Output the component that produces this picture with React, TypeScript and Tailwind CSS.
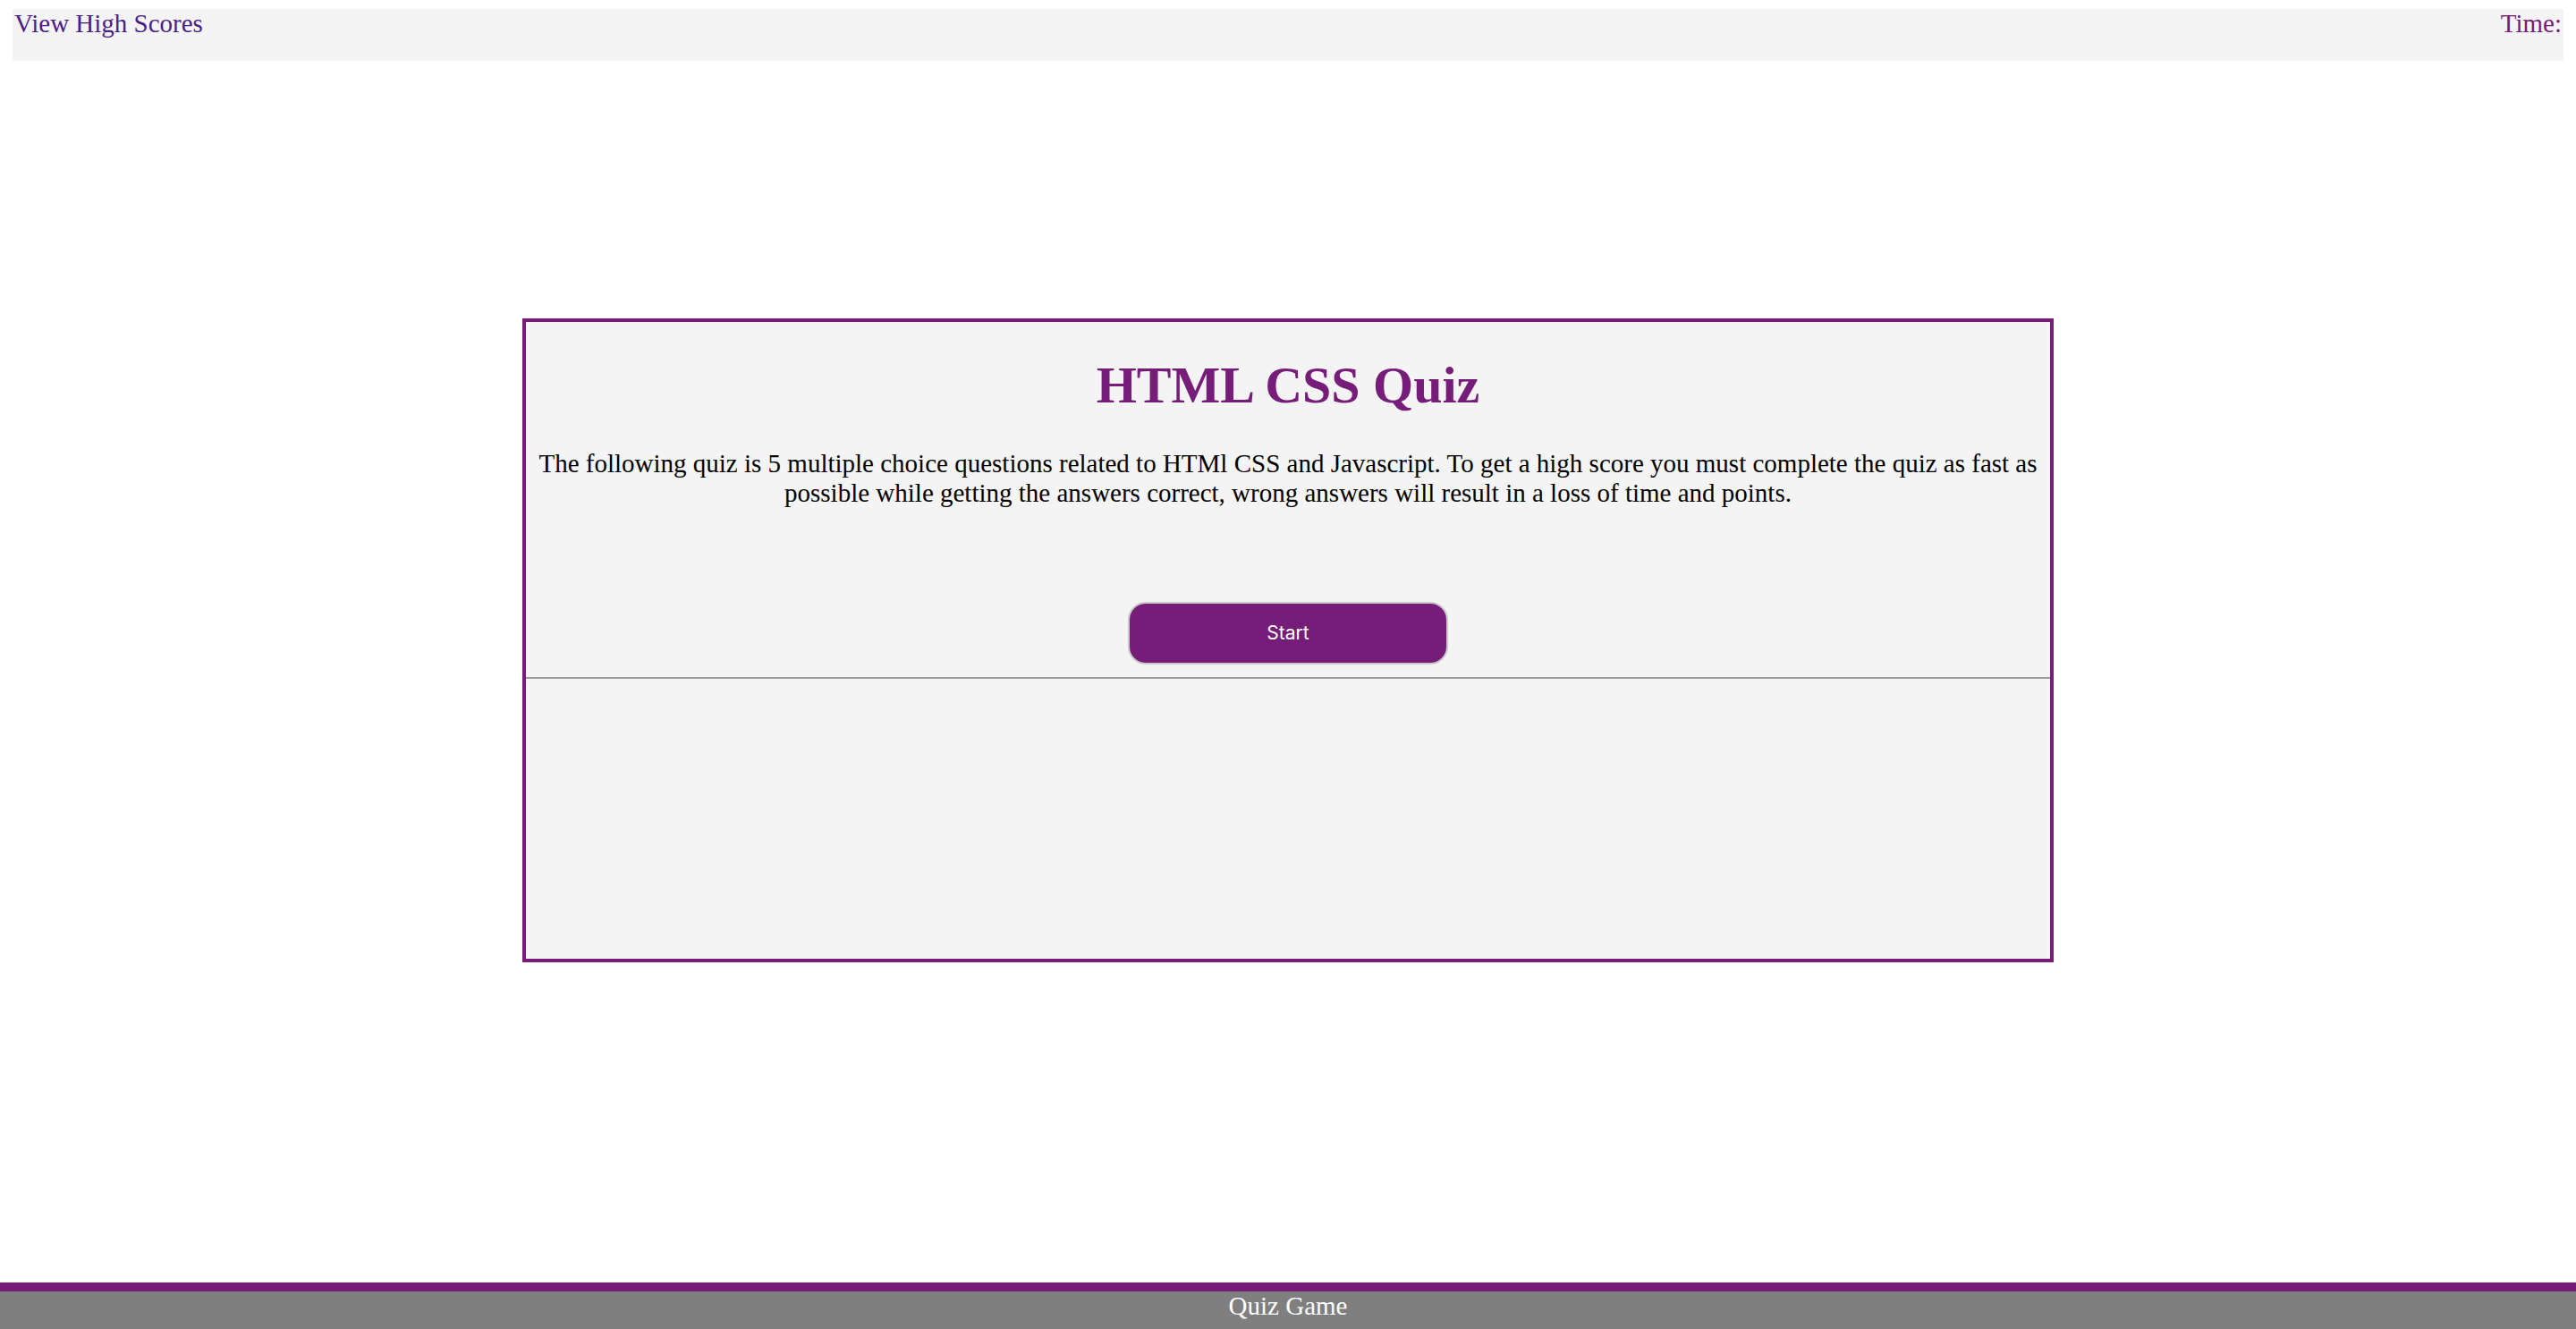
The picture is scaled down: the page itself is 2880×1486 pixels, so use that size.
export default function App() {
  return (
    <div className="flex min-h-screen flex-col bg-white font-['Liberation_Serif','Times_New_Roman',serif]">
      <header className="mx-[14px] mt-[10px] flex h-[58px] items-start justify-between bg-[#f4f4f4] px-[2px] text-[29px] leading-[33px]">
        <a className="text-[#4b1f86]">View High Scores</a>
        <span className="text-[#761c79]">Time:</span>
      </header>

      <main className="flex flex-1 justify-center">
        <section className="mt-[288px] flex h-[720px] w-[1712px] flex-col border-4 border-[#761c79] bg-[#f4f4f4]">
          <div className="flex flex-col items-center px-[6px]">
            <h1 className="mt-[37px] text-[58px] font-bold leading-[67px] text-[#761c79]">HTML CSS Quiz</h1>
            <p className="mt-[38px] text-center text-[29px] leading-[33px] text-black">
              The following quiz is 5 multiple choice questions related to HTMl CSS and Javascript. To get a high score you must complete the quiz as fast as possible while getting the answers correct, wrong answers will result in a loss of time and points.
            </p>
            <button
              type="button"
              className="mt-[105px] h-[70px] w-[358px] rounded-[20px] border-2 border-[#c9c9c9] bg-[#761c79] font-['Inter',sans-serif] text-[21px] text-white"
            >
              Start
            </button>
          </div>
          <hr className="mt-[14px] border-t-2 border-[#9b9b9b]" />
        </section>
      </main>

      <footer className="mt-auto border-t-[10px] border-[#741b78] bg-[#7f7f7f] text-center">
        <div className="h-[42px] text-[29px] leading-[33px] text-white">Quiz Game</div>
      </footer>
    </div>
  )
}
